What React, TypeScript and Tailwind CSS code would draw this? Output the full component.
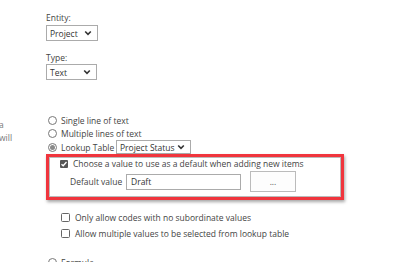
import React from "react";

const Chevron = () => (
  <svg width="8" height="6" viewBox="0 0 8 6" className="shrink-0">
    <path d="M1.2 1.5 L4 4.3 L6.8 1.5" fill="none" stroke="#333" strokeWidth="1.6" />
  </svg>
);

const FakeSelect = ({ label, w, h = 16 }: { label: string; w: number; h?: number }) => (
  <div
    className="flex items-center justify-between whitespace-nowrap border border-[#ababab] bg-white pl-[3px] pr-[5px] text-[#333]"
    style={{ width: w, height: h }}
  >
    <span>{label}</span>
    <Chevron />
  </div>
);

const Radio = ({ checked = false }: { checked?: boolean }) => (
  <div className="flex h-[9px] w-[9px] shrink-0 items-center justify-center rounded-full border border-[#777] bg-white">
    {checked && <div className="h-[5px] w-[5px] rounded-full bg-[#8a8a8a]" />}
  </div>
);

const Checkbox = ({ checked = false }: { checked?: boolean }) =>
  checked ? (
    <div className="flex h-[8px] w-[8px] shrink-0 items-center justify-center rounded-[1px] bg-[#555]">
      <svg width="8" height="8" viewBox="0 0 8 8">
        <path d="M1.5 4.2 L3.2 5.8 L6.5 2" fill="none" stroke="#fff" strokeWidth="1.3" />
      </svg>
    </div>
  ) : (
    <div className="h-[9px] w-[9px] shrink-0 rounded-[1.5px] border border-[#666] bg-white" />
  );

export default function App() {
  return (
    <div
      className="relative h-[262px] w-[400px] overflow-hidden whitespace-nowrap bg-white text-[8.5px] leading-[13px] text-[#444]"
      style={{ fontFamily: '"Open Sans", "Noto Sans", sans-serif' }}
    >
      <div className="flex">
        {/* clipped description column */}
        <div className="w-[46px] shrink-0 pt-[118px] text-[#777]">
          <div className="-ml-[1px]">a</div>
          <div className="-ml-[1px]">will</div>
        </div>

        <div className="flex flex-col pt-[11px]">
          <div>Entity:</div>
          <div className="mt-[1px]">
            <FakeSelect label="Project" w={52} />
          </div>
          <div className="mt-[10px]">Type:</div>
          <div>
            <FakeSelect label="Text" w={51} />
          </div>

          <div className="ml-[2px] mt-[34px] flex flex-col">
            <div className="flex h-[13px] items-center gap-[4px]">
              <Radio />
              <span>Single line of text</span>
            </div>
            <div className="flex h-[13px] items-center gap-[4px]">
              <Radio />
              <span>Multiple lines of text</span>
            </div>
            <div className="flex h-[14px] items-center gap-[4px]">
              <Radio checked />
              <span className="w-[51px]">Lookup Table</span>
              <FakeSelect label="Project Status" w={75} h={14} />
            </div>
          </div>

          <div className="flex h-[46px] w-[298px] flex-col border-[3px] border-[#f0353d] pl-[11px] shadow-[1px_2px_3px_rgba(0,0,0,0.35),inset_0_0_0_1px_#bbb]">
            <div className="flex h-[13px] items-center gap-[5px]">
              <Checkbox checked />
              <span>Choose a value to use as a default when adding new items</span>
            </div>
            <div className="mt-[1px] flex items-center">
              <span className="ml-[10px] w-[56px]">Default value</span>
              <div className="flex h-[16px] w-[115px] items-center border border-[#ababab] pl-[4px] text-[#333]">
                Draft
              </div>
              <div className="ml-[9px] flex h-[21px] w-[46px] items-center justify-center border border-[#bbb] bg-[#fdfdfd] text-[#555]">
                ...
              </div>
            </div>
          </div>

          <div className="ml-[15px] mt-[11px] flex flex-col gap-[3px]">
            <div className="flex h-[13px] items-center gap-[5px]">
              <Checkbox />
              <span>Only allow codes with no subordinate values</span>
            </div>
            <div className="flex h-[13px] items-center gap-[5px]">
              <Checkbox />
              <span>Allow multiple values to be selected from lookup table</span>
            </div>
          </div>

          <div className="ml-[2px] mt-[16px] flex h-[13px] items-center gap-[4px]">
            <Radio />
            <span>Formula</span>
          </div>
        </div>
      </div>
    </div>
  );
}
